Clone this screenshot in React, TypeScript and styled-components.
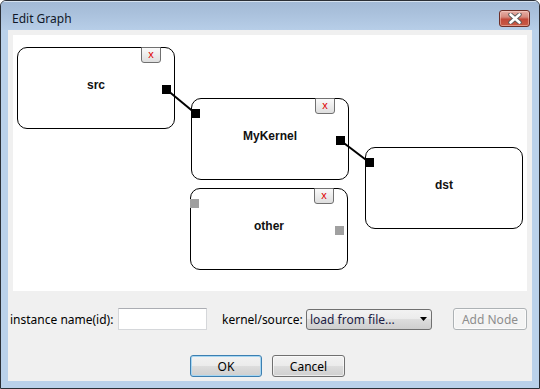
import React from "react";
import styled, { createGlobalStyle } from "styled-components";

const GlobalStyle = createGlobalStyle`
  html, body { margin: 0; padding: 0; background: #ffffff; }
  * { box-sizing: border-box; }
`;

const UI_FONT = `"Noto Sans", "Liberation Sans", Arial, sans-serif`;

const Window = styled.div`
  width: 540px;
  height: 389px;
  border: 1px solid #2b2f36;
  border-radius: 6px 6px 0 0;
  background: #bad1ea;
  display: flex;
  flex-direction: column;
  padding: 0 7px 7px 7px;
  font-family: ${UI_FONT};
  font-size: 12px;
  position: relative;
  overflow: hidden;
`;

const TitleBar = styled.div`
  height: 29px;
  margin: 0 -7px;
  padding: 0 9px 0 11px;
  display: flex;
  align-items: flex-start;
  justify-content: space-between;
  background: linear-gradient(#a3bad6 0%, #abc2dd 45%, #b7cee8 100%);
  border-top: 1px solid #d6e2ef;
`;

const Title = styled.span`
  font-family: ${UI_FONT};
  font-size: 12px;
  line-height: 16px;
  color: #101828;
  margin-top: 9px;
`;

const CloseBtn = styled.div`
  width: 31px;
  height: 17px;
  margin-top: 8px;
  border: 1px solid #6d2f28;
  border-radius: 3px;
  background: linear-gradient(#e7b0a8 0%, #d68a7e 40%, #c2493a 55%, #c85a45 100%);
  display: flex;
  align-items: center;
  justify-content: center;
  box-shadow: inset 0 0 0 1px rgba(255, 220, 210, 0.45);
`;

const Client = styled.div`
  flex: 1;
  background: #f0f0f0;
  display: flex;
  flex-direction: column;
`;

const Canvas = styled.div`
  position: relative;
  width: 514px;
  height: 256px;
  margin: 5px 0 0 5px;
  background: #ffffff;
`;

const NodeBox = styled.div`
  position: absolute;
  width: 158px;
  height: 82px;
  border: 1px solid #000;
  border-radius: 10px;
  background: #fff;
`;

const NodeLabel = styled.div`
  position: absolute;
  left: 0;
  right: 0;
  top: 29px;
  text-align: center;
  font-family: "Liberation Sans", Arial, sans-serif;
  font-weight: bold;
  font-size: 12px;
  line-height: 16px;
  color: #111;
`;

const Port = styled.div<{ $side: "in" | "out"; $active: boolean }>`
  position: absolute;
  width: 9px;
  height: 9px;
  left: ${(p) => (p.$side === "in" ? "-1px" : "144px")};
  top: ${(p) => (p.$side === "in" ? "10px" : "37px")};
  background: ${(p) => (p.$active ? "#000" : "#a0a0a0")};
`;

const NodeClose = styled.div`
  position: absolute;
  left: 123px;
  top: -1px;
  width: 20px;
  height: 16px;
  border: 1px solid #707070;
  border-radius: 0 0 3px 3px;
  background: linear-gradient(#fafafa 0%, #ececec 50%, #dedede 100%);
  color: #e00000;
  font-family: "Liberation Sans", Arial, sans-serif;
  font-size: 11px;
  line-height: 13px;
  text-align: center;
`;

const Edges = styled.svg`
  position: absolute;
  left: 0;
  top: 0;
  pointer-events: none;
`;

const FormRow = styled.div`
  display: flex;
  align-items: center;
  height: 22px;
  margin-top: 17px;
  padding-left: 2px;
`;

const Label = styled.span<{ $w: number; $ml?: number }>`
  width: ${(p) => p.$w}px;
  margin-left: ${(p) => p.$ml ?? 0}px;
  font-family: ${UI_FONT};
  font-size: 12px;
  color: #000;
  white-space: nowrap;
`;

const TextInput = styled.input`
  width: 89px;
  height: 22px;
  border: 1px solid #d5d7da;
  border-top-color: #abadb3;
  background: #fff;
  outline: none;
  padding: 0 3px;
  font-family: ${UI_FONT};
  font-size: 12px;
`;

const Select = styled.div`
  width: 126px;
  height: 21px;
  border: 1px solid #707070;
  border-radius: 3px;
  background: linear-gradient(#f2f2f2 0%, #ebebeb 50%, #dddddd 50%, #cfcfcf 100%);
  display: flex;
  align-items: center;
  justify-content: space-between;
  padding: 0 4px 0 3px;
  font-family: ${UI_FONT};
  font-size: 12px;
  color: #1c1c44;
`;

const Button = styled.div<{ $w: number; $default?: boolean; $disabled?: boolean; $ml?: number }>`
  width: ${(p) => p.$w}px;
  height: 22px;
  margin-left: ${(p) => p.$ml ?? 0}px;
  border: 1px solid ${(p) => (p.$default ? "#3c7fb1" : p.$disabled ? "#adb2b5" : "#707070")};
  border-radius: 3px;
  background: ${(p) =>
    p.$disabled
      ? "#f4f4f4"
      : "linear-gradient(#f2f2f2 0%, #ebebeb 50%, #dddddd 50%, #cfcfcf 100%)"};
  box-shadow: ${(p) => (p.$default ? "inset 0 0 0 1px #a6d6f2" : "inset 0 0 0 1px rgba(255,255,255,0.6)")};
  display: flex;
  align-items: center;
  justify-content: center;
  font-family: ${UI_FONT};
  font-size: 12px;
  color: ${(p) => (p.$disabled ? "#8d8d8d" : "#000")};
`;

const ButtonRow = styled.div`
  display: flex;
  gap: 10px;
  margin-top: 25px;
  padding-left: 182px;
`;

type NodeData = {
  id: string;
  x: number;
  y: number;
  hasIn: boolean;
  hasOut: boolean;
  closable: boolean;
  active: boolean;
};

const nodes: NodeData[] = [
  { id: "src", x: 4, y: 12, hasIn: false, hasOut: true, closable: true, active: true },
  { id: "MyKernel", x: 178, y: 63, hasIn: true, hasOut: true, closable: true, active: true },
  { id: "other", x: 177, y: 153, hasIn: true, hasOut: true, closable: true, active: false },
  { id: "dst", x: 352, y: 112, hasIn: true, hasOut: false, closable: false, active: true },
];

const outCenter = (n: NodeData) => ({ x: n.x + 145 + 4.5, y: n.y + 38 + 4.5 });
const inCenter = (n: NodeData) => ({ x: n.x + 0 + 4.5, y: n.y + 11 + 4.5 });

const links: [string, string][] = [
  ["src", "MyKernel"],
  ["MyKernel", "dst"],
];

const byId = (id: string) => nodes.find((n) => n.id === id)!;

export default function App() {
  return (
    <>
      <GlobalStyle />
      <Window>
        <TitleBar>
          <Title>Edit Graph</Title>
          <CloseBtn>
            <svg width="14" height="11" viewBox="0 0 14 11">
              <path d="M2.5 1.5 L11.5 9.5 M11.5 1.5 L2.5 9.5" stroke="#5a5a5a" strokeWidth="4.4" strokeLinecap="round" />
              <path d="M2.5 1.5 L11.5 9.5 M11.5 1.5 L2.5 9.5" stroke="#ffffff" strokeWidth="2.6" strokeLinecap="round" />
            </svg>
          </CloseBtn>
        </TitleBar>
        <Client>
          <Canvas>
            {nodes.map((n) => (
              <NodeBox key={n.id} style={{ left: n.x, top: n.y }}>
                <NodeLabel>{n.id}</NodeLabel>
                {n.closable && <NodeClose>x</NodeClose>}
                {n.hasIn && <Port $side="in" $active={n.active} />}
                {n.hasOut && <Port $side="out" $active={n.active} />}
              </NodeBox>
            ))}
            <Edges width="514" height="256">
              {links.map(([a, b]) => {
                const p = outCenter(byId(a));
                const q = inCenter(byId(b));
                return <line key={a + b} x1={p.x} y1={p.y} x2={q.x} y2={q.y} stroke="#000" strokeWidth="2" />;
              })}
            </Edges>
          </Canvas>
          <FormRow>
            <Label $w={108}>instance name(id):</Label>
            <TextInput />
            <Label $w={84} $ml={15}>kernel/source:</Label>
            <Select>
              <span>load from file...</span>
              <svg width="7" height="4" viewBox="0 0 7 4">
                <path d="M0 0 H7 L3.5 4 Z" fill="#000" />
              </svg>
            </Select>
            <Button $w={74} $ml={21} $disabled>Add Node</Button>
          </FormRow>
          <ButtonRow>
            <Button $w={72} $default>OK</Button>
            <Button $w={73}>Cancel</Button>
          </ButtonRow>
        </Client>
      </Window>
    </>
  );
}
